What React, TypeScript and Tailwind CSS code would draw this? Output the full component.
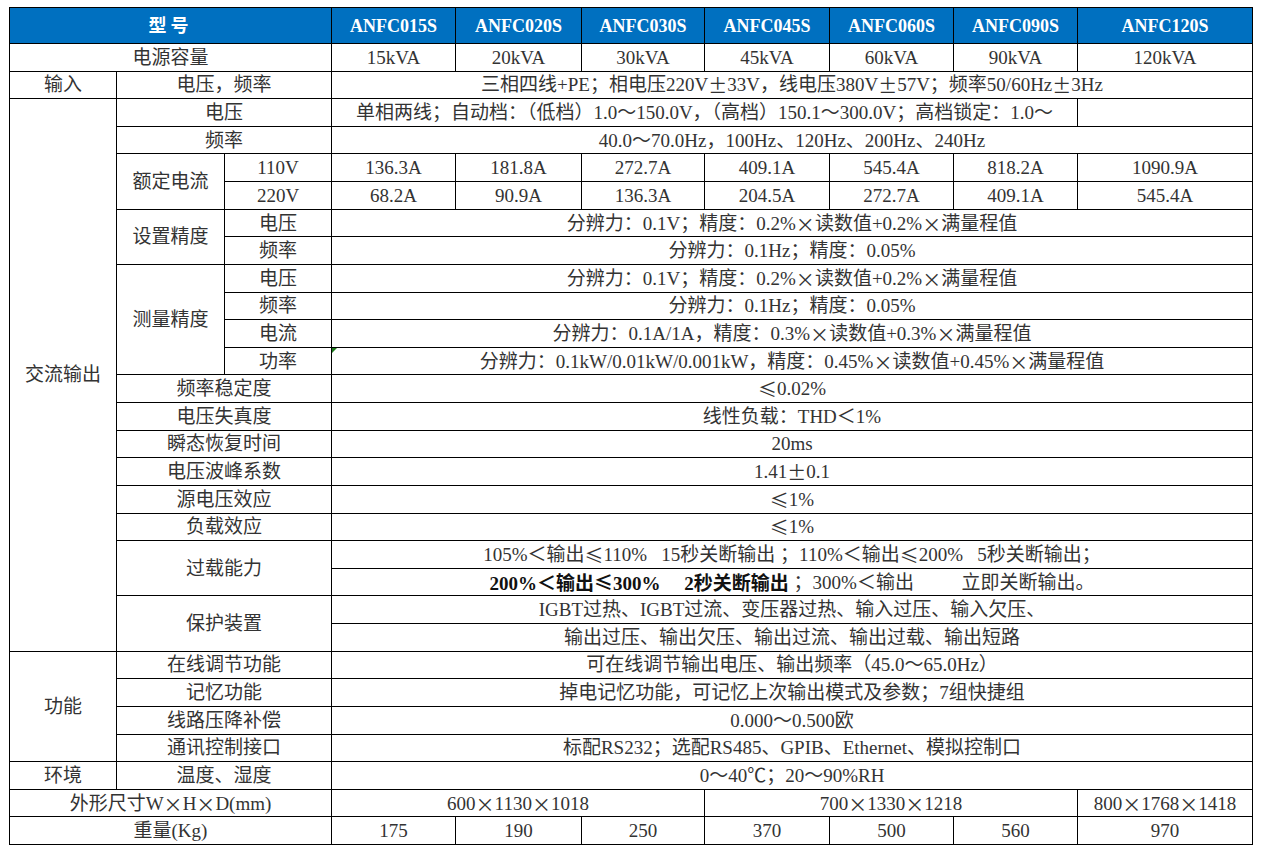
import React from "react";

type CellProps = {
  className?: string;
  children?: React.ReactNode;
};

// ±、×、≤ 在原表里是全角宽度，用 CJK 字体的 fwid 特性显示
function fw(text: string) {
  return text.split(/([±×≤])/).map((part, i) =>
    /^[±×≤]$/.test(part) ? (
      <span
        key={i}
        className="font-['Noto_Sans_CJK_SC',sans-serif] [font-feature-settings:'fwid']"
      >
        {part}
      </span>
    ) : (
      part
    )
  );
}

function Cell({ className = "", children }: CellProps) {
  return (
    <div
      className={
        "flex items-center justify-center border-r border-b border-black whitespace-pre overflow-hidden " +
        className
      }
    >
      {typeof children === "string" ? fw(children) : children}
    </div>
  );
}

function Head({ className = "", children }: CellProps) {
  return (
    <Cell className={"bg-[#0070c0] text-white font-bold text-[18px] " + className}>
      {children}
    </Cell>
  );
}

export default function App() {
  return (
    <div className="min-h-screen bg-white pt-[7px] pl-[9px] text-[19px] leading-none text-[#333] font-['Liberation_Serif','Noto_Sans_CJK_SC',serif]">
      <div className="grid w-fit h-[838px] grid-cols-[107px_108px_107px_124px_126px_123px_125px_124px_124px_175px] grid-rows-[36px_repeat(29,minmax(0,1fr))] border-l border-t border-black">
        {/* 表头 */}
        <Head className="col-start-1 col-span-3 row-start-1 tracking-[4px]">型号</Head>
        <Head className="col-start-4 row-start-1">ANFC015S</Head>
        <Head className="col-start-5 row-start-1">ANFC020S</Head>
        <Head className="col-start-6 row-start-1">ANFC030S</Head>
        <Head className="col-start-7 row-start-1">ANFC045S</Head>
        <Head className="col-start-8 row-start-1">ANFC060S</Head>
        <Head className="col-start-9 row-start-1">ANFC090S</Head>
        <Head className="col-start-10 row-start-1">ANFC120S</Head>

        {/* 电源容量 */}
        <Cell className="col-start-1 col-span-3 row-start-2">电源容量</Cell>
        <Cell className="col-start-4 row-start-2">15kVA</Cell>
        <Cell className="col-start-5 row-start-2">20kVA</Cell>
        <Cell className="col-start-6 row-start-2">30kVA</Cell>
        <Cell className="col-start-7 row-start-2">45kVA</Cell>
        <Cell className="col-start-8 row-start-2">60kVA</Cell>
        <Cell className="col-start-9 row-start-2">90kVA</Cell>
        <Cell className="col-start-10 row-start-2">120kVA</Cell>

        {/* 输入 */}
        <Cell className="col-start-1 row-start-3">输入</Cell>
        <Cell className="col-start-2 col-span-2 row-start-3">电压，频率</Cell>
        <Cell className="col-start-4 col-span-7 row-start-3">
          三相四线+PE；相电压220V±33V，线电压380V±57V；频率50/60Hz±3Hz
        </Cell>

        {/* 交流输出 */}
        <Cell className="col-start-1 row-start-4 row-span-20">交流输出</Cell>
        <Cell className="col-start-2 col-span-2 row-start-4">电压</Cell>
        <Cell className="col-start-4 col-span-6 row-start-4">
          单相两线；自动档：（低档）1.0～150.0V，（高档）150.1～300.0V；高档锁定：1.0～
        </Cell>
        <Cell className="col-start-10 row-start-4" />

        <Cell className="col-start-2 col-span-2 row-start-5">频率</Cell>
        <Cell className="col-start-4 col-span-7 row-start-5">
          40.0～70.0Hz，100Hz、120Hz、200Hz、240Hz
        </Cell>

        <Cell className="col-start-2 row-start-6 row-span-2">额定电流</Cell>
        <Cell className="col-start-3 row-start-6">110V</Cell>
        <Cell className="col-start-4 row-start-6">136.3A</Cell>
        <Cell className="col-start-5 row-start-6">181.8A</Cell>
        <Cell className="col-start-6 row-start-6">272.7A</Cell>
        <Cell className="col-start-7 row-start-6">409.1A</Cell>
        <Cell className="col-start-8 row-start-6">545.4A</Cell>
        <Cell className="col-start-9 row-start-6">818.2A</Cell>
        <Cell className="col-start-10 row-start-6">1090.9A</Cell>
        <Cell className="col-start-3 row-start-7">220V</Cell>
        <Cell className="col-start-4 row-start-7">68.2A</Cell>
        <Cell className="col-start-5 row-start-7">90.9A</Cell>
        <Cell className="col-start-6 row-start-7">136.3A</Cell>
        <Cell className="col-start-7 row-start-7">204.5A</Cell>
        <Cell className="col-start-8 row-start-7">272.7A</Cell>
        <Cell className="col-start-9 row-start-7">409.1A</Cell>
        <Cell className="col-start-10 row-start-7">545.4A</Cell>

        <Cell className="col-start-2 row-start-8 row-span-2">设置精度</Cell>
        <Cell className="col-start-3 row-start-8">电压</Cell>
        <Cell className="col-start-4 col-span-7 row-start-8">
          分辨力：0.1V；精度：0.2%×读数值+0.2%×满量程值
        </Cell>
        <Cell className="col-start-3 row-start-9">频率</Cell>
        <Cell className="col-start-4 col-span-7 row-start-9">分辨力：0.1Hz；精度：0.05%</Cell>

        <Cell className="col-start-2 row-start-10 row-span-4">测量精度</Cell>
        <Cell className="col-start-3 row-start-10">电压</Cell>
        <Cell className="col-start-4 col-span-7 row-start-10">
          分辨力：0.1V；精度：0.2%×读数值+0.2%×满量程值
        </Cell>
        <Cell className="col-start-3 row-start-11">频率</Cell>
        <Cell className="col-start-4 col-span-7 row-start-11">分辨力：0.1Hz；精度：0.05%</Cell>
        <Cell className="col-start-3 row-start-12">电流</Cell>
        <Cell className="col-start-4 col-span-7 row-start-12">
          分辨力：0.1A/1A，精度：0.3%×读数值+0.3%×满量程值
        </Cell>
        <Cell className="col-start-3 row-start-13">功率</Cell>
        <Cell className="relative col-start-4 col-span-7 row-start-13">
          <span className="absolute left-0 top-0 h-0 w-0 border-t-[5px] border-r-[5px] border-t-[#1d7b1d] border-r-transparent" />
          {fw("分辨力：0.1kW/0.01kW/0.001kW，精度：0.45%×读数值+0.45%×满量程值")}
        </Cell>

        <Cell className="col-start-2 col-span-2 row-start-14">频率稳定度</Cell>
        <Cell className="col-start-4 col-span-7 row-start-14">≤0.02%</Cell>
        <Cell className="col-start-2 col-span-2 row-start-15">电压失真度</Cell>
        <Cell className="col-start-4 col-span-7 row-start-15">线性负载：THD＜1%</Cell>
        <Cell className="col-start-2 col-span-2 row-start-16">瞬态恢复时间</Cell>
        <Cell className="col-start-4 col-span-7 row-start-16">20ms</Cell>
        <Cell className="col-start-2 col-span-2 row-start-17">电压波峰系数</Cell>
        <Cell className="col-start-4 col-span-7 row-start-17">1.41±0.1</Cell>
        <Cell className="col-start-2 col-span-2 row-start-18">源电压效应</Cell>
        <Cell className="col-start-4 col-span-7 row-start-18">≤1%</Cell>
        <Cell className="col-start-2 col-span-2 row-start-19">负载效应</Cell>
        <Cell className="col-start-4 col-span-7 row-start-19">≤1%</Cell>

        <Cell className="col-start-2 col-span-2 row-start-20 row-span-2">过载能力</Cell>
        <Cell className="col-start-4 col-span-7 row-start-20">
          105%＜输出≤110%   15秒关断输出 ；110%＜输出≤200%   5秒关断输出；
        </Cell>
        <Cell className="col-start-4 col-span-7 row-start-21">
          <span className="font-bold text-[#111]">{fw("200%＜输出≤300%     2秒关断输出")}</span>
          {" ；300%＜输出          立即关断输出。"}
        </Cell>

        <Cell className="col-start-2 col-span-2 row-start-22 row-span-2">保护装置</Cell>
        <Cell className="col-start-4 col-span-7 row-start-22">
          IGBT过热、IGBT过流、变压器过热、输入过压、输入欠压、
        </Cell>
        <Cell className="col-start-4 col-span-7 row-start-23">
          输出过压、输出欠压、输出过流、输出过载、输出短路
        </Cell>

        {/* 功能 */}
        <Cell className="col-start-1 row-start-24 row-span-4">功能</Cell>
        <Cell className="col-start-2 col-span-2 row-start-24">在线调节功能</Cell>
        <Cell className="col-start-4 col-span-7 row-start-24">
          可在线调节输出电压、输出频率（45.0～65.0Hz）
        </Cell>
        <Cell className="col-start-2 col-span-2 row-start-25">记忆功能</Cell>
        <Cell className="col-start-4 col-span-7 row-start-25">
          掉电记忆功能，可记忆上次输出模式及参数；7组快捷组
        </Cell>
        <Cell className="col-start-2 col-span-2 row-start-26">线路压降补偿</Cell>
        <Cell className="col-start-4 col-span-7 row-start-26">0.000～0.500欧</Cell>
        <Cell className="col-start-2 col-span-2 row-start-27">通讯控制接口</Cell>
        <Cell className="col-start-4 col-span-7 row-start-27">
          标配RS232；选配RS485、GPIB、Ethernet、模拟控制口
        </Cell>

        {/* 环境 */}
        <Cell className="col-start-1 row-start-28">环境</Cell>
        <Cell className="col-start-2 col-span-2 row-start-28">温度、湿度</Cell>
        <Cell className="col-start-4 col-span-7 row-start-28">0～40℃；20～90%RH</Cell>

        {/* 外形尺寸 */}
        <Cell className="col-start-1 col-span-3 row-start-29">外形尺寸W×H×D(mm)</Cell>
        <Cell className="col-start-4 col-span-3 row-start-29">600×1130×1018</Cell>
        <Cell className="col-start-7 col-span-3 row-start-29">700×1330×1218</Cell>
        <Cell className="col-start-10 row-start-29">800×1768×1418</Cell>

        {/* 重量 */}
        <Cell className="col-start-1 col-span-3 row-start-30">重量(Kg)</Cell>
        <Cell className="col-start-4 row-start-30">175</Cell>
        <Cell className="col-start-5 row-start-30">190</Cell>
        <Cell className="col-start-6 row-start-30">250</Cell>
        <Cell className="col-start-7 row-start-30">370</Cell>
        <Cell className="col-start-8 row-start-30">500</Cell>
        <Cell className="col-start-9 row-start-30">560</Cell>
        <Cell className="col-start-10 row-start-30">970</Cell>
      </div>
    </div>
  );
}
